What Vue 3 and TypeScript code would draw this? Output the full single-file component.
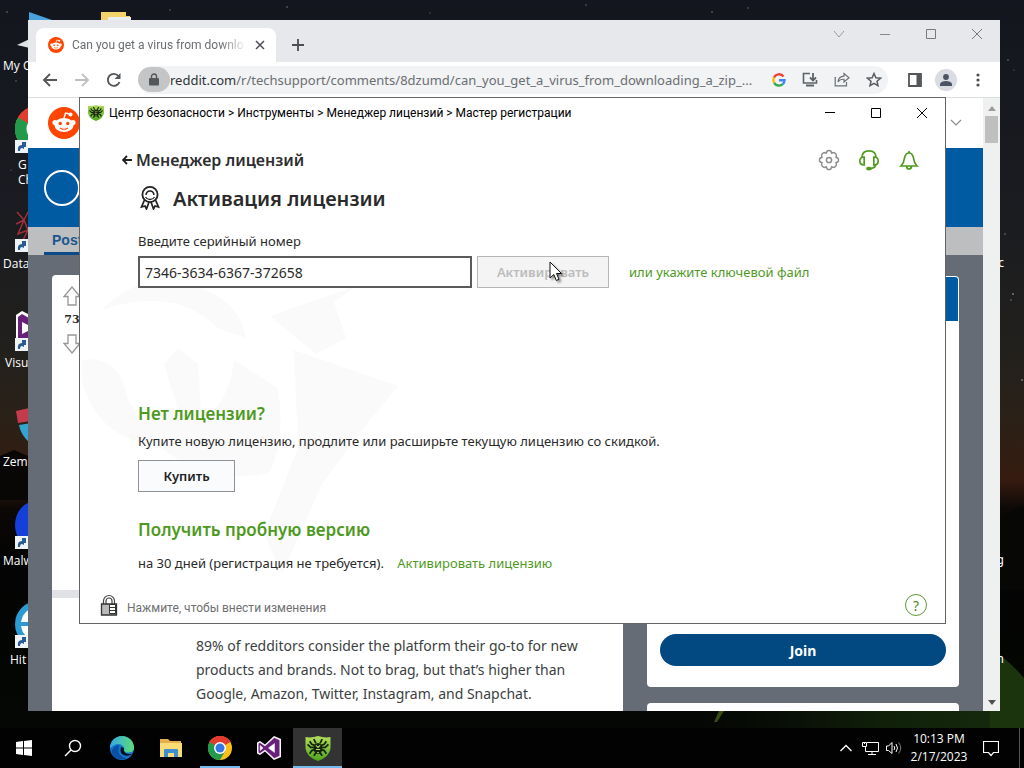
<script setup lang="ts">
import { ref } from 'vue'

interface Shortcut {
  id: string
  lines: string[]
  linked: boolean
}

const shortcuts: Shortcut[] = [
  { id: 'computer', lines: ['My C'], linked: false },
  { id: 'chrome', lines: ['G', 'Ch'], linked: true },
  { id: 'data', lines: ['Data'], linked: true },
  { id: 'studio', lines: ['Visu'], linked: true },
  { id: 'zemana', lines: ['Zem'], linked: false },
  { id: 'malware', lines: ['Malw'], linked: true },
  { id: 'hitman', lines: ['Hit'], linked: true },
]
const farLabels = ['', '', 'c', '', '', 'g', 'n']
const trail = 'Центр безопасности > Инструменты > Менеджер лицензий > Мастер регистрации'
const serial = ref('7346-3634-6367-372658')
const address = ref('/r/techsupport/comments/8dzumd/can_you_get_a_virus_from_downloading_a_zip_...')
const spiderLegs = 'M9 9 6 8 4 5M9 11 5 11 2 8M9 13 6 14 4 17M15 9 18 8 20 5M15 11 19 11 22 8M15 13 18 14 20 17M10 7 8 3M14 7 16 3M10 16 8 19M14 16 16 19'
</script>

<template>
  <div class="desktop">
    <svg class="defs" width="0" height="0" aria-hidden="true">
      <defs>
        <linearGradient id="shieldFill" x1="0" y1="0" x2="0" y2="1">
          <stop offset="0" stop-color="#b4dc5c" /><stop offset="1" stop-color="#4fa51c" />
        </linearGradient>
        <linearGradient id="edgeTop" x1="0" y1="0" x2="1" y2="0">
          <stop offset="0" stop-color="#36a9e8" /><stop offset="1" stop-color="#5bdc76" />
        </linearGradient>
        <symbol id="shield" viewBox="0 0 24 24">
          <path d="M0 1Q6 2 12 0Q18 2 24 1V12Q23 20 12 24Q1 20 0 12Z" fill="url(#shieldFill)" />
          <path :d="spiderLegs" fill="none" stroke="#15260c" stroke-width="1.7" />
          <ellipse cx="12" cy="12" rx="4.2" ry="5.4" fill="#15260c" />
          <path d="M10 9l2 2 2-2M10 13h4M11 16h2" fill="none" stroke="#b4dc5c" />
        </symbol>
        <symbol id="chromeLogo" viewBox="0 0 48 48">
          <circle cx="24" cy="24" r="24" fill="#fbc116" />
          <path d="M24 24 3.2 12A24 24 0 0 1 44.8 12Z" fill="#e33b2e" />
          <path d="M24 12H44.8A24 24 0 0 0 3.2 12L13.6 30Z" fill="#e33b2e" />
          <path d="M3.2 12A24 24 0 0 0 24 48L34.4 30 24 24Z" fill="#229a4b" />
          <circle cx="24" cy="24" r="12" fill="#fff" />
          <circle cx="24" cy="24" r="9" fill="#3578e5" />
        </symbol>
        <symbol id="snoo" viewBox="0 0 32 32">
          <circle cx="16" cy="16" r="16" fill="#ff4500" />
          <path d="M16 11l1.5-5 4.5 1" fill="none" stroke="#fff" stroke-width="1.4" />
          <circle cx="22.5" cy="7.500" r="2" fill="#fff" />
          <circle cx="7" cy="15.500" r="2.600" fill="#fff" /><circle cx="25" cy="15.500" r="2.600" fill="#fff" />
          <ellipse cx="16" cy="18" rx="9.600" ry="7" fill="#fff" />
          <circle cx="12.300" cy="16.500" r="1.700" fill="#ff4500" /><circle cx="19.700" cy="16.500" r="1.700" fill="#ff4500" />
          <path d="M12 21q4 2.600 8 0" fill="none" stroke="#ff4500" stroke-width="1.100" />
        </symbol>
        <linearGradient id="grass" x1="0" y1="0" x2="1" y2="0">
          <stop offset="0" stop-color="#0a1206" stop-opacity="0" /><stop offset=".6" stop-color="#10200a" /><stop offset="1" stop-color="#152a0c" />
        </linearGradient>
      </defs>
    </svg>

    <div class="workspace">
      <svg class="sky" viewBox="0 0 1024 728" preserveAspectRatio="none" aria-hidden="true">
        <path d="M700 728V708H1000V728Z" fill="url(#grass)" />
        <path d="M1000 655Q1014 666 1024 678V728H990V700Z" fill="#1b340e" />
        <path d="M714 722 719 711H724L717 722Z" fill="#5c7d14" opacity=".6" />
        <path d="M1000 522Q1012 508 1024 506V590H1000Z" fill="#070706" />
        <path d="M0 456 14 450 28 456V500H0Z" fill="#080706" />
        <g fill="#77797e">
          <circle cx="7" cy="12" r=".8" /><circle cx="16" cy="81" r=".7" /><circle cx="11" cy="170" r=".6" />
          <circle cx="170" cy="10" r=".7" /><circle cx="287" cy="7" r=".8" /><circle cx="430" cy="13" r=".6" />
          <circle cx="586" cy="5" r=".7" /><circle cx="712" cy="12" r=".8" /><circle cx="748" cy="8" r=".7" />
          <circle cx="1008" cy="60" r=".8" /><circle cx="1014" cy="70" r=".6" /><circle cx="1005" cy="234" r=".8" />
          <circle cx="1013" cy="294" r="1" /><circle cx="1011" cy="300" r=".8" /><circle cx="1022" cy="380" r="1" />
        </g>
        <path d="M29 12 52 20H29Z" fill="#4aa3dc" />
        <path d="M101 12h25v4h4v6h-29Z" fill="#f1d36a" /><path d="M108 17h23v5h-23Z" fill="#e9eef2" />
      </svg>

      <ul class="shortcuts">
        <li v-for="item in shortcuts" :key="item.id" class="shortcut">
          <svg class="shortcut-art" viewBox="0 0 48 48" aria-hidden="true">
            <path v-if="item.id === 'computer'" d="M3 39 20 31V43Z" fill="#dfe3e6" />
            <use v-else-if="item.id === 'chrome'" href="#chromeLogo" x="1" y="1" width="46" height="46" />
            <path v-else-if="item.id === 'data'" d="M3 8 10 16 14 8M2 20 10 16 14 26M10 16 4 30 14 26 8 38M2 36 14 38" fill="none" stroke="#a5303a" stroke-width="1.4" />
            <g v-else-if="item.id === 'studio'">
              <path d="M2 12 8 8 16 12V44H2Z" fill="#fff" /><path d="M4 14 8 11 20 18V42H4Z" fill="#68217a" />
              <path d="M8 19 20 25 8 31Z" fill="#fff" />
            </g>
            <g v-else-if="item.id === 'zemana'">
              <path d="M2 9 24 4V18L4 21Z" fill="#c33b4d" /><path d="M5 23 24 20V46Q8 38 5 23Z" fill="#35a4d0" />
            </g>
            <ellipse v-else-if="item.id === 'malware'" cx="22" cy="24" rx="21" ry="24" fill="#1240d8" />
            <g v-else>
              <circle cx="24" cy="24" r="20" fill="#fff" stroke="#2c9bd2" stroke-width="6" />
              <path d="M5 24H40" stroke="#2c9bd2" stroke-width="4" />
            </g>
            <g v-if="item.linked">
              <path d="M1 35H14V48H1Z" fill="#eef3f7" />
              <path d="M4 46Q3 40 8 40V37H12V42H10V44L8 43Q6 43 6 46Z" fill="#295b93" />
            </g>
          </svg>
          <span v-for="line in item.lines" :key="line" class="shortcut-line">{{ line }}</span>
        </li>
      </ul>
      <ul class="far-labels">
        <li v-for="(label, i) in farLabels" :key="i">{{ label }}</li>
      </ul>

      <section class="browser" aria-label="Chrome">
        <div class="tabstrip">
          <div class="tab">
            <svg class="favicon" aria-hidden="true"><use href="#snoo" /></svg>
            <span class="tab-title">Can you get a virus from downlo</span>
            <button class="plain" aria-label="Close tab">
              <svg width="10" height="10" viewBox="0 0 10 10"><path d="M1 1 9 9M9 1 1 9" stroke="#4c4f53" stroke-width="1.500" /></svg>
            </button>
          </div>
          <button class="plain new-tab" aria-label="New tab">
            <svg width="12" height="12" viewBox="0 0 12 12"><path d="M6 0V12M0 6H12" stroke="#4a4d51" stroke-width="1.800" /></svg>
          </button>
          <div class="window-keys">
            <button class="plain" aria-label="Search tabs"><svg width="12" height="12" viewBox="0 0 12 12"><path d="M1 3 6 9 11 3" fill="none" stroke="#9a9ca0" /></svg></button>
            <button class="plain" aria-label="Minimize"><svg width="12" height="12" viewBox="0 0 12 12"><path d="M1 6.500H11" stroke="#85878b" /></svg></button>
            <button class="plain" aria-label="Maximize"><svg width="12" height="12" viewBox="0 0 12 12"><path d="M1.500 1.500H10.500V10.500H1.500Z" fill="none" stroke="#77797d" /></svg></button>
            <button class="plain" aria-label="Close"><svg width="12" height="12" viewBox="0 0 12 12"><path d="M1 1 11 11M11 1 1 11" stroke="#77797d" /></svg></button>
          </div>
        </div>

        <div class="toolbar">
          <button class="plain" aria-label="Back"><svg width="16" height="16" viewBox="0 0 16 16"><path d="M15 8H2M8 2 2 8l6 6" fill="none" stroke="#54575b" stroke-width="1.900" /></svg></button>
          <button class="plain" aria-label="Forward"><svg width="16" height="16" viewBox="0 0 16 16"><path d="M1 8H14M8 2 14 8l-6 6" fill="none" stroke="#bfc0c2" stroke-width="1.900" /></svg></button>
          <button class="plain" aria-label="Reload"><svg width="16" height="16" viewBox="0 0 16 16"><path d="M13.500 10A6 6 0 1 1 12.500 4" fill="none" stroke="#54575b" stroke-width="1.900" /><path d="M14.500 1V7H8.500Z" fill="#54575b" /></svg></button>
          <div class="omnibox">
            <button class="plain site-info" aria-label="Site information"><svg width="10" height="13" viewBox="0 0 10 13"><path d="M2.500 6V3.500a2.500 2.500 0 0 1 5 0V6" fill="none" stroke="#55585b" stroke-width="1.400" /><rect y="5" width="10" height="7.500" rx="1" fill="#55585b" /></svg></button>
            <span class="host">reddit.com</span>
            <input v-model="address" class="url" aria-label="Address" />
            <button class="plain" aria-label="Google"><svg width="14" height="14" viewBox="0 0 14 14" fill="none" stroke-width="2.400"><path d="M11.500 3.400A5.600 5.600 0 0 0 2 4.600" stroke="#ea4335" /><path d="M2 4.600A5.600 5.600 0 0 0 2.200 9.800" stroke="#fbbc05" /><path d="M2.200 9.800A5.600 5.600 0 0 0 10.800 11.200" stroke="#34a853" /><path d="M10.800 11.200A5.600 5.600 0 0 0 12.500 7.200H7" stroke="#4285f4" /></svg></button>
            <button class="plain" aria-label="Install"><svg width="16" height="15" viewBox="0 0 16 15"><path d="M8 1.500H1.500V11H14.500V8" fill="none" stroke="#5f6368" stroke-width="1.600" /><path d="M4 13.500H12M11 1V8M8 5.500 11 8.500 14 5.500" fill="none" stroke="#5f6368" stroke-width="1.800" /></svg></button>
            <button class="plain" aria-label="Share"><svg width="16" height="15" viewBox="0 0 16 15"><path d="M2 5.500H1.200V13.800H12.500V10" fill="none" stroke="#6c7074" stroke-width="1.200" /><path d="M4 10Q4.500 4.500 10 4.200V1.500L15 5.800 10 10V7.300Q6 7 4 10Z" fill="none" stroke="#6c7074" stroke-width="1.200" /></svg></button>
            <button class="plain" aria-label="Bookmark"><svg width="16" height="15" viewBox="0 0 16 15"><path d="M8 1.500 9.900 5.700 14.500 6.200 11 9.200 12 13.700 8 11.400 4 13.700 5 9.200 1.500 6.200 6.100 5.700Z" fill="none" stroke="#5a5d61" stroke-width="1.500" /></svg></button>
          </div>
          <button class="plain" aria-label="Side panel"><svg width="14" height="14" viewBox="0 0 14 14"><path d="M1 1H13V13H1Z" fill="none" stroke="#55585b" stroke-width="1.800" /><path d="M8.500 1H13V13H8.500Z" fill="#55585b" /></svg></button>
          <button class="plain avatar" aria-label="Profile"><svg width="12" height="12" viewBox="0 0 12 12" fill="#4b5365"><circle cx="6" cy="3" r="2.900" /><path d="M0 12V9.800Q1.500 7 6 7T12 9.800V12Z" /></svg></button>
          <button class="plain" aria-label="Menu"><svg width="4" height="14" viewBox="0 0 4 14" fill="#4d5053"><circle cx="2" cy="2" r="1.600" /><circle cx="2" cy="7" r="1.600" /><circle cx="2" cy="12" r="1.600" /></svg></button>
        </div>

        <div class="viewport">
          <div class="page">
            <header class="site-head">
              <svg class="site-logo" aria-hidden="true"><use href="#snoo" /></svg>
              <svg width="12" height="8" viewBox="0 0 12 8" aria-hidden="true"><path d="M1 1 6 6 11 1" fill="none" stroke="#8b8d90" stroke-width="1.200" /></svg>
            </header>
            <div class="banner"><span class="ring"></span></div>
            <nav class="tabs"><a href="#posts">Posts</a></nav>
            <div class="columns">
              <main class="feed">
                <article class="post">
                  <div class="votes">
                    <button class="plain" aria-label="Upvote"><svg width="18" height="20" viewBox="0 0 18 20"><path d="M9 1 17 10.500H13V19H5V10.500H1Z" fill="none" stroke="#949698" stroke-width="1.300" /></svg></button>
                    <span>73</span>
                    <button class="plain" aria-label="Downvote"><svg width="18" height="20" viewBox="0 0 18 20"><path d="M9 19 17 9.500H13V1H5V9.500H1Z" fill="none" stroke="#949698" stroke-width="1.300" /></svg></button>
                  </div>
                </article>
                <div class="divider"></div>
                <p class="promo">89% of redditors consider the platform their go-to for new products and brands. Not to brag, but that’s higher than Google, Amazon, Twitter, Instagram, and Snapchat.</p>
              </main>
              <aside class="side">
                <div class="about">
                  <div class="about-head"></div>
                  <button class="join">Join</button>
                </div>
                <div class="rules"></div>
              </aside>
            </div>
          </div>
          <div class="scrollbar" aria-hidden="true">
            <svg width="8" height="5" viewBox="0 0 8 5"><path d="M0 5 4 0 8 5Z" fill="#9b9b9b" /></svg>
            <span class="thumb"></span>
            <svg width="8" height="5" viewBox="0 0 8 5"><path d="M0 0 4 5 8 0Z" fill="#505050" /></svg>
          </div>
        </div>
      </section>

      <section class="wizard" aria-label="Мастер регистрации">
        <svg class="watermark" viewBox="0 0 320 290" aria-hidden="true">
          <path d="M20 22Q58-20 118 0 158 14 164 50L136 40Q120 24 96 16 60 8 20 22ZM0 72Q38 66 46 112 64 142 84 120L96 122 82 76 96 60 116 76 120 134Q148 112 152 72L196 100Q204 150 188 184 130 200 76 158 14 150 0 92ZM188 28 274-2 252 14 264 50 234 66ZM212 62 316 98 280 142 240 196 200 286 182 246 216 160Z" fill="#fafafa" />
        </svg>
        <header class="titlebar">
          <svg class="app-mark" aria-hidden="true"><use href="#shield" /></svg>
          <span class="trail">{{ trail }}</span>
          <div class="wizard-keys">
            <button class="plain" aria-label="Свернуть"><svg width="12" height="12" viewBox="0 0 12 12"><path d="M1 5.500H11" stroke="#000" /></svg></button>
            <button class="plain" aria-label="Развернуть"><svg width="12" height="12" viewBox="0 0 12 12"><path d="M1.500 1.500H10.500V10.500H1.500Z" fill="none" stroke="#000" /></svg></button>
            <button class="plain" aria-label="Закрыть"><svg width="12" height="12" viewBox="0 0 12 12"><path d="M1 1 11 11M11 1 1 11" stroke="#000" /></svg></button>
          </div>
        </header>

        <div class="topline">
          <a class="back" href="#licenses">
            <svg width="10" height="10" viewBox="0 0 10 10" aria-hidden="true"><path d="M10 5H1.500M5 1 1 5 5 9" fill="none" stroke="#222" stroke-width="1.800" /></svg>
            Менеджер лицензий
          </a>
          <div class="tools">
            <button class="plain" aria-label="Настройки"><svg width="22" height="22" viewBox="0 0 22 22" fill="none" stroke="#8b8d8b" stroke-width="1.500"><path d="M9 2.200Q11 .8 13 2.200L13.600 4 15.700 3.500Q18 4 18.500 6.300L18 8.400 19.800 9Q21.200 11 19.800 13L18 13.600 18.500 15.700Q18 18 15.700 18.500L13.600 18 13 19.800Q11 21.200 9 19.800L8.400 18 6.300 18.500Q4 18 3.500 15.700L4 13.600 2.200 13Q.8 11 2.200 9L4 8.400 3.500 6.300Q4 4 6.300 3.500L8.400 4Z" /><circle cx="11" cy="11" r="2.600" /></svg></button>
            <button class="plain" aria-label="Поддержка"><svg width="22" height="22" viewBox="0 0 22 22" fill="none" stroke="#4f9a1e" stroke-width="1.700"><path d="M4 8.500Q4 1.800 11 1.800T18 8.500" /><path d="M6.200 8V16Q1.800 16 1.800 12T6.200 8ZM15.800 8V16Q20.200 16 20.200 12T15.800 8ZM18 15.500Q17 19 13 19.500" /><ellipse cx="11" cy="19.600" rx="2" ry="1" fill="#4f9a1e" /></svg></button>
            <button class="plain" aria-label="Уведомления"><svg width="22" height="22" viewBox="0 0 22 22" fill="none" stroke="#4f9a1e" stroke-width="1.700"><path d="M3 17H19Q16 14 15.500 9Q14.500 4 11 4T6.500 9Q6 14 3 17ZM8.500 17.500Q9 20 11 20T13.500 17.500" /><path d="M11 2V4" /></svg></button>
          </div>
        </div>

        <div class="content">
          <h1>
            <svg width="20" height="24" viewBox="0 0 20 24" fill="none" stroke="#222" stroke-width="1.800" aria-hidden="true"><circle cx="10" cy="8.500" r="7.600" /><path d="M6 9Q6.500 5 10 5T14 9" stroke-width="1.500" /><path d="M5.500 11Q7 13.500 10 13.500T14.500 11" stroke-width="1.300" /><path d="M4.500 14 1.500 21 5 20 6.500 23 9 16M15.500 14 18.500 21 15 20 13.500 23 11 16" stroke-width="1.700" /></svg>
            Активация лицензии
          </h1>
          <label for="serial">Введите серийный номер</label>
          <div class="entry">
            <input id="serial" v-model="serial" class="serial" type="text" />
            <button class="box activate" disabled>Активировать</button>
            <a class="keyfile" href="#keyfile">или укажите ключевой файл</a>
          </div>
          <h2>Нет лицензии?</h2>
          <p class="offer">Купите новую лицензию, продлите или расширьте текущую лицензию со скидкой.</p>
          <button class="box buy">Купить</button>
          <h2 class="trial-head">Получить пробную версию</h2>
          <p class="trial">на 30 дней (регистрация не требуется). <a href="#trial">Активировать лицензию</a></p>
        </div>

        <footer class="foot">
          <button class="plain unlock">
            <svg width="18" height="22" viewBox="0 0 18 22" aria-hidden="true"><path d="M3.500 10V7a5.500 5.500 0 0 1 11 0v3M6 10V7a3 3 0 0 1 6 0v3" fill="none" stroke="#444" stroke-width="1.200" /><path d="M1.500 10H16.500V21H1.500Z" fill="#b9b9b9" stroke="#333" stroke-width="1.300" /><path d="M9.500 10.500H15.500V19.500H9.500ZM9.500 13.500H15.500M9.500 16.500H15.500" fill="#fff" stroke="#333" /></svg>
            Нажмите, чтобы внести изменения
          </button>
          <button class="plain help" aria-label="Справка">?</button>
        </footer>
      </section>

      <svg class="pointer" viewBox="0 0 14 22" aria-hidden="true"><path d="M1 1V17L4.800 13.500 7.300 19.500 10 18.300 7.500 12.500H12.500Z" fill="#fff" stroke="#111" /></svg>
    </div>

    <footer class="taskbar">
      <button class="plain task start" aria-label="Start"><svg width="16" height="16" viewBox="0 0 16 16" fill="#fff"><path d="M0 2 7 1V7.500H0ZM8 1 16 0V7.500H8ZM0 8.500H7V15L0 14ZM8 8.500H16V16L8 15Z" /></svg></button>
      <button class="plain task" aria-label="Search"><svg width="18" height="18" viewBox="0 0 18 18" fill="none" stroke="#fff" stroke-width="1.400"><circle cx="11" cy="7" r="5.500" /><path d="M7 11 1 17" /></svg></button>
      <button class="plain task" aria-label="Edge"><svg width="24" height="24" viewBox="0 0 24 24"><circle cx="12" cy="12" r="12" fill="#1374cc" /><path d="M0 12A12 12 0 0 1 24 12Q24 16 19 16.500 13 17 14 14 15 12 13 10 8 5 0 12Z" fill="url(#edgeTop)" /><path d="M9 11Q6 20 17 22.500 6 26 1.500 17 2 10 9 9Z" fill="#0b4fa3" /><path d="M11 11Q9 18 15 19.500 19 20.500 22.800 17.500 18 19 15 16.500 13 14 14 12Z" fill="#041220" /></svg></button>
      <button class="plain task" aria-label="Explorer"><svg width="22" height="18" viewBox="0 0 22 18"><path d="M0 0H8L10 2H21V18H0Z" fill="#e5b04a" /><path d="M0 4H22V18H0Z" fill="#fadc77" /><path d="M4 18V11Q4 10 5 10H17Q18 10 18 11V18H14V14H8V18Z" fill="#3f8fd0" /></svg></button>
      <button class="plain task running" aria-label="Chrome"><svg width="24" height="24"><use href="#chromeLogo" /></svg></button>
      <button class="plain task" aria-label="Visual Studio"><svg width="24" height="24" viewBox="0 0 24 24"><path d="M17 0 24 3V21L17 24 8 15.500 3 19 0 17.500V6.500L3 5 8 8.500Z" fill="#fff" /><path d="M17.300 1.500 22.800 4V20L17.300 22.500 8 14 3 17.600 1.200 16.500V7.500L3 6.400 8 10ZM17.500 7.500 11.500 12 17.500 16.500ZM3.200 9.500V14.500L6 12Z" fill="#68217a" fill-rule="evenodd" stroke="#fff" stroke-width=".5" /></svg></button>
      <button class="plain task active" aria-label="Dr.Web"><svg width="26" height="25"><use href="#shield" /></svg></button>
      <div class="tray">
        <button class="plain" aria-label="Show hidden icons"><svg width="12" height="8" viewBox="0 0 12 8"><path d="M0.500 7 6 1.500 11.500 7" fill="none" stroke="#fff" stroke-width="1.300" /></svg></button>
        <button class="plain" aria-label="Network"><svg width="17" height="14" viewBox="0 0 17 14" fill="none" stroke="#fff"><path d="M5 1.500H16.500V10.500H3.500V6M10 10.500V13.500M6 13.500H14M.5 1.500H4.500V5.500H.5ZM2.500 1V3" /></svg></button>
        <button class="plain" aria-label="Volume"><svg width="16" height="14" viewBox="0 0 16 14" fill="none" stroke="#fff"><path d="M.5 5H2.500L6 1.500V12.500L2.500 9.500H.5ZM8 5Q9.500 7 8 9M10 3Q13 7 10 11" /><path d="M12.500 1.500Q17 7 12.500 12.500" stroke="#777" /></svg></button>
        <button class="plain clock"><span>10:13 PM</span><span>2/17/2023</span></button>
        <button class="plain notice" aria-label="Notifications"><svg width="16" height="17" viewBox="0 0 16 17"><path d="M.5 1.500H15.500V12.500H10.500L8 15.500 5.500 12.500H.5Z" fill="none" stroke="#fff" stroke-width="1.200" /></svg></button>
        <span class="peek"></span>
      </div>
    </footer>
  </div>
</template>

<style>
body { margin: 0; background: #000; }
</style>

<style scoped>
.desktop, .desktop * { box-sizing: border-box; }
.desktop { display: flex; flex-direction: column; height: 100vh; overflow: hidden; font-family: "Noto Sans", "Open Sans", sans-serif; font-size: 13px; color: #2a2a2a; }
.defs { position: absolute; }
.desktop svg { display: block; flex: none; }
.plain { border: 0; padding: 0; background: none; font: inherit; color: inherit; display: flex; align-items: center; justify-content: center; flex: none; }
a { text-decoration: none; }
ul { list-style: none; margin: 0; padding: 0; }
h1, h2, p { margin: 0; }

.workspace { position: relative; flex: 1; min-height: 0; background: linear-gradient(#14161f 0, #1a1c20 30%, #22201d 48%, #2b2117 58%, #361b10 66%, #0b0806 70%, #030403 78%, #050704 100%); }
.sky { position: absolute; inset: 0; width: 100%; height: 100%; }
.shortcuts { position: absolute; top: 0; left: 0; width: 76px; color: #fff; font-size: 12px; font-family: "Open Sans", sans-serif; }
.shortcut { height: 99px; padding-top: 6px; line-height: 15px; }
.shortcut-art { width: 48px; height: 48px; margin: 0 0 4px 14px; }
.shortcut-line { display: block; padding-left: 3px; }
.shortcut:nth-child(2) .shortcut-line { padding-left: 18px; }
.shortcut:nth-child(4) .shortcut-line { padding-left: 5px; }
.shortcut:nth-child(7) .shortcut-line { padding-left: 10px; }
.far-labels { position: absolute; top: 57px; right: 20px; width: 30px; color: #fff; font-size: 12px; line-height: 15px; text-align: right; }
.far-labels li { height: 99px; }

.browser { position: absolute; inset: 20px 24px 17px 28px; display: flex; flex-direction: column; overflow: hidden; background: #fff; }
.tabstrip { display: flex; height: 42px; flex: none; background: #e7e8ec; padding-left: 8px; }
.tab { display: flex; align-items: center; width: 240px; margin-top: 8px; padding: 0 11px 0 12px; gap: 8px; border-radius: 8px 8px 0 0; background: #fff; }
.favicon { width: 16px; height: 16px; }
.tab-title { flex: 1; white-space: nowrap; font: 12px Roboto, sans-serif; color: #6b6e72; mask-image: linear-gradient(90deg, #000 85%, transparent); }
.new-tab { width: 44px; margin-top: 8px; }
.window-keys { display: flex; align-items: flex-start; gap: 34px; margin-left: auto; padding: 8px 17px 0 0; }
.toolbar { display: flex; align-items: center; height: 36px; flex: none; padding: 0 20px 0 14px; gap: 16px; background: #fff; border-bottom: 1px solid #dcdfe1; }
.omnibox { display: flex; align-items: center; flex: 1; min-width: 0; height: 28px; margin-right: 4px; padding-right: 6px; gap: 16px; border-radius: 14px; background: #f1f3f4; font-size: 13px; }
.site-info { width: 32px; height: 25px; border-radius: 13px; background: #c3c5c6; margin-right: -16px; }
.host { color: #303236; margin-right: -16px; }
.url { flex: 1; min-width: 0; border: 0; padding: 0; background: none; font: inherit; color: #6b6e72; margin-right: -12px; }
.avatar { width: 22px; height: 22px; border-radius: 50%; background: #d9dce3; margin: 0 3px 0 -3px; }
.viewport { display: flex; flex: 1; min-height: 0; }
.page { flex: 1; min-width: 0; display: flex; flex-direction: column; background: #656c75; }
.site-head { display: flex; align-items: center; justify-content: space-between; height: 50px; flex: none; padding: 0 21px 0 20px; background: #fff; }
.site-logo { width: 32px; height: 32px; }
.banner { display: flex; align-items: center; height: 79px; flex: none; padding-left: 16px; background: #005ba3; }
.ring { width: 36px; height: 36px; border: 2px solid #fff; border-radius: 50%; }
.tabs { display: flex; height: 28px; flex: none; padding-left: 16px; background: #bcbec0; }
.tabs a { width: 52px; padding-left: 8px; border-bottom: 3px solid #0a4a86; font: bold 14px/26px "Liberation Sans", sans-serif; color: #1c568f; }
.columns { display: flex; flex: 1; min-height: 0; gap: 24px; padding: 20px 24px 0; }
.feed { display: flex; flex-direction: column; flex: 1; min-width: 0; border-radius: 4px 4px 0 0; background: #fff; overflow: hidden; }
.post { height: 315px; flex: none; padding: 11px 0 0 10px; }
.votes { display: flex; flex-direction: column; align-items: center; width: 20px; font: bold 11px/28px "DejaVu Serif", serif; }
.divider { height: 8px; flex: none; background: #e0e2e6; }
.promo { margin: 36px 40px 0 144px; font-size: 14px; line-height: 24px; color: #3c3f42; }
.side { display: flex; flex-direction: column; gap: 16px; width: 312px; flex: none; padding-top: 1px; }
.about { display: flex; flex-direction: column; height: 411px; flex: none; padding: 1px 1px 21px; border-radius: 4px; background: #fff; }
.about-head { height: 44px; border-radius: 3px 3px 0 0; background: #005ba3; }
.join { height: 32px; margin: auto 12px 0; border: 0; border-radius: 16px; background: #014980; color: #fff; font: bold 14px "Noto Sans", sans-serif; }
.rules { flex: 1; border-radius: 4px 4px 0 0; background: #fff; }
.scrollbar { display: flex; flex-direction: column; align-items: center; width: 17px; flex: none; padding: 8px 0 6px; background: #eff0f0; }
.scrollbar svg:last-child { margin-top: auto; }
.thumb { width: 13px; height: 27px; margin-top: 5px; background: #bfbfbf; }

.wizard { position: absolute; inset: 97px 78px 104px 79px; display: flex; flex-direction: column; border: 1px solid #646464; background: #fff; overflow: hidden; }
.watermark { position: absolute; left: 2px; top: 190px; width: 320px; height: 290px; overflow: visible; }
.wizard > :not(.watermark) { position: relative; }
.titlebar { display: flex; align-items: center; height: 29px; flex: none; padding: 0 17px 0 8px; gap: 5px; color: #000; }
.app-mark { width: 16px; height: 16px; }
.trail { white-space: nowrap; font-family: Roboto, sans-serif; font-size: 12px; }
.wizard-keys { display: flex; gap: 34px; margin-left: auto; }
.topline { display: flex; align-items: center; justify-content: space-between; height: 36px; flex: none; margin-top: 15px; padding: 0 25px 0 42px; }
.back { display: flex; align-items: center; gap: 4px; font-size: 16px; font-weight: 600; color: #2e2e2e; }
.tools { display: flex; gap: 18px; }
.content { padding: 0 58px; }
h1 { display: flex; align-items: center; gap: 13px; height: 40px; padding-left: 2px; font-size: 20px; font-weight: 600; }
label { display: block; margin-top: 13px; line-height: 20px; }
.entry { display: flex; align-items: center; margin-top: 5px; }
.serial { width: 334px; height: 32px; border: 2px solid #5b5b5d; padding: 0 5px; background: #fff; font: inherit; font-size: 14px; color: #2a2a2a; }
.box { height: 32px; border: 1px solid #8f9194; padding: 0; font: 600 13px "Noto Sans", sans-serif; }
.activate { width: 132px; margin: 0 20px 0 5px; border-color: #b6b6b6; background: #f4f4f4; color: #bcbcbc; }
.keyfile, .trial a { color: #4f9a1e; }
h2 { margin-top: 112px; font-size: 17px; line-height: 28px; font-weight: 600; color: #4f9a1e; }
.offer { margin-top: 3px; line-height: 20px; }
.buy { width: 97px; margin-top: 9px; background: #fafbfd; color: #222; }
.trial-head { margin-top: 24px; }
.trial { margin-top: 9px; line-height: 20px; }
.trial a { margin-left: 10px; }
.foot { display: flex; align-items: center; justify-content: space-between; margin-top: auto; padding: 0 18px 7px 20px; }
.unlock { align-items: flex-end; gap: 9px; font: 12px/16px Roboto, sans-serif; color: #707070; }
.help { width: 22px; height: 22px; border: 1px solid #5c9a35; border-radius: 50%; color: #4c8a25; font-size: 14px; }
.pointer { position: absolute; left: 549px; top: 261px; width: 14px; height: 22px; filter: drop-shadow(2px 2px 1px #0006); }

.taskbar { display: flex; height: 40px; flex: none; background: #020202; color: #fff; }
.task { width: 49px; }
.start { width: 48px; }
.running { background: linear-gradient(#76b9ed, #76b9ed) center bottom / 40px 2px no-repeat; }
.active { background: linear-gradient(#76b9ed, #76b9ed) center bottom / 100% 2px no-repeat #333; }
.tray { display: flex; align-items: center; gap: 10px; margin-left: auto; }
.tray .plain:nth-child(3) { margin-left: -3px; }
.clock { flex-direction: column; width: 54px; font: 12px/18px "Open Sans", sans-serif; }
.notice { margin: 0 10px 0 7px; }
.peek { width: 5px; height: 40px; border-left: 1px solid #555; }
</style>
